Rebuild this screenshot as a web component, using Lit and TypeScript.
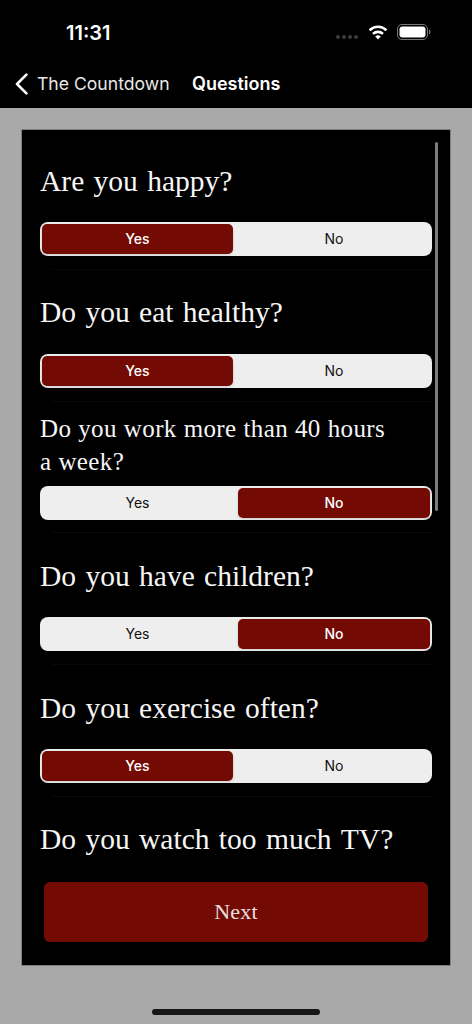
import { LitElement, html, css, svg } from "lit";
import { customElement } from "lit/decorators.js";

const QUESTIONS: { q: string; a?: "yes" | "no"; two?: boolean }[] = [
  { q: "Are you happy?", a: "yes" },
  { q: "Do you eat healthy?", a: "yes" },
  { q: "Do you work more than 40 hours a week?", a: "no", two: true },
  { q: "Do you have children?", a: "no" },
  { q: "Do you exercise often?", a: "yes" },
  { q: "Do you watch too much TV?" },
];

@customElement("app-root")
export class AppRoot extends LitElement {
  static styles = css`
    :host {
      display: flex;
      flex-direction: column;
      width: 472px;
      height: 1024px;
      background: #a9a9a9;
      position: relative;
      overflow: hidden;
      font-family: "Inter", "Liberation Sans", sans-serif;
    }
    .top {
      background: #000;
      height: 108px;
      color: #fff;
      display: flex;
      flex-direction: column;
      flex: none;
    }
    .status {
      height: 64px;
      display: flex;
      align-items: center;
      justify-content: space-between;
      padding: 0 0 0 66px;
    }
    .time {
      font-size: 20px;
      font-weight: 600;
      line-height: 22px;
      margin-top: 1px;
    }
    .status-icons {
      display: flex;
      align-items: center;
      margin-right: 41px;
    }
    .dots {
      margin-top: 10px;
    }
    .wifi {
      margin: 0 9px;
    }
    .nav {
      display: flex;
      align-items: center;
      height: 40px;
      padding-left: 15px;
      line-height: 22px;
    }
    .chev {
      display: block;
      margin-right: 9px;
    }
    .back {
      color: #e8e8e8;
      width: 155px;
      font-size: 17.6px;
    }
    .title {
      font-weight: 600;
      font-size: 18px;
    }
    .content {
      flex: 1;
      padding: 22px 22px 59px;
      display: flex;
    }
    .card {
      flex: 1;
      background: #000;
      box-shadow: 0 0 0 0.5px #555;
      position: relative;
      display: flex;
      flex-direction: column;
      overflow: hidden;
    }
    .list {
      height: 732px;
      overflow: hidden;
      padding-top: 8px;
      flex: none;
    }
    .row {
      height: 131.75px;
      box-sizing: border-box;
      padding: 0 18px;
      display: flex;
      flex-direction: column;
    }
    .q {
      font-family: "Liberation Serif", serif;
      font-size: 29.5px;
      word-spacing: 2px;
      font-kerning: none;
      color: #f6f6f6;
      height: 84px;
      flex: none;
      display: flex;
      align-items: center;
      font-weight: 400;
      margin: 0;
      padding-top: 2px;
      box-sizing: border-box;
    }
    .q.two {
      font-size: 25px;
      line-height: 32.5px;
      letter-spacing: 0.38px;
      word-spacing: 0.3px;
      padding: 4px 40px 0 0;
    }
    .seg {
      height: 34px;
      border-radius: 8px;
      background: #eeeeee;
      display: grid;
      grid-template-columns: 191px 1fr;
      box-sizing: border-box;
      padding: 2px;
      gap: 5px;
      flex: none;
    }
    .opt {
      display: flex;
      align-items: center;
      justify-content: center;
      font-size: 14px;
      font-weight: 400;
      color: #111;
      border-radius: 5px;
      padding-bottom: 1px;
    }
    .opt.on {
      background: #730a04;
      color: #fff;
      font-weight: 500;
      box-shadow: 0 1px 3px rgba(0, 0, 0, 0.15);
    }
    .sep {
      margin: auto 0 0 12px;
      height: 1px;
      background: #090909;
      flex: none;
    }
    .next {
      margin: 12px 22px 0;
      height: 60px;
      background: #730a04;
      border-radius: 6px;
      border: 0;
      color: #e6e0e0;
      font-family: "Liberation Serif", serif;
      font-size: 22px;
      letter-spacing: 0.2px;
      flex: none;
      padding: 0 0 1px;
    }
    .scrollbar {
      position: absolute;
      right: 12px;
      top: 12px;
      width: 3px;
      height: 369px;
      border-radius: 2px;
      background: #7c7c7c;
    }
    .home {
      position: absolute;
      left: 152px;
      top: 1009px;
      width: 168px;
      height: 6px;
      border-radius: 3px;
      background: #161616;
    }
  `;

  render() {
    return html`
      <div class="top">
        <div class="status">
          <span class="time">11:31</span>
          <div class="status-icons">
            <svg class="dots" width="24" height="6" viewBox="0 0 24 6">
              ${[3, 9, 15, 21].map((x) => svg`<circle cx=${x} cy="3" r="2" fill="#3c3c3c"/>`)}
            </svg>
            <svg class="wifi" width="20" height="15" viewBox="0 0 20 15">
              <path d="M10 14.6 7.2 11.6a4 4 0 0 1 5.6 0Z" fill="#fff"/>
              <path d="M5 8.9a7.2 7.2 0 0 1 10 0M1.6 5.2a12 12 0 0 1 16.8 0" fill="none" stroke="#fff" stroke-width="2.6"/>
            </svg>
            <svg width="34" height="16" viewBox="0 0 34 16">
              <rect x="0.5" y="0.5" width="30" height="15" rx="4.5" fill="none" stroke="#777"/>
              <rect x="2.5" y="2.5" width="26" height="11" rx="3" fill="#fff"/>
              <path d="M32 5.6c1 .3 1.4 1.3 1.4 2.4s-.4 2.1-1.4 2.4Z" fill="#777"/>
            </svg>
          </div>
        </div>
        <div class="nav">
          <svg class="chev" width="13" height="22" viewBox="0 0 13 22">
            <path d="M11.4 1.6 2 11l9.4 9.4" fill="none" stroke="#fff" stroke-width="2.6" stroke-linecap="round" stroke-linejoin="round"/>
          </svg>
          <span class="back">The Countdown</span>
          <span class="title">Questions</span>
        </div>
      </div>
      <div class="content">
        <div class="card">
          <div class="list">
            ${QUESTIONS.map(
              (r) => html`
                <div class="row">
                  <h2 class="q ${r.two ? "two" : ""}">${r.q}</h2>
                  ${r.a
                    ? html`<div class="seg">
                          <div class="opt ${r.a === "yes" ? "on" : ""}">Yes</div>
                          <div class="opt ${r.a === "no" ? "on" : ""}">No</div>
                        </div>
                        <div class="sep"></div>`
                    : ""}
                </div>
              `
            )}
          </div>
          <button class="next">Next</button>
          <div class="scrollbar"></div>
        </div>
      </div>
      <div class="home"></div>
    `;
  }
}
